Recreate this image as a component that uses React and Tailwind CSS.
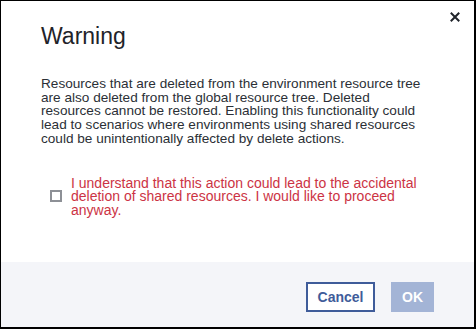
export default function App() {
  return (
    <div className="w-[476px] h-[329px] bg-white border border-black border-r-2 border-b-2 flex flex-col font-['Liberation_Sans',Arial,sans-serif]">
      <div className="relative flex-1 pl-[40px] pr-[44px]">
        <button className="absolute right-[13px] top-[10px] w-[12px] h-[12px] flex items-center justify-center text-[#1f2329]">
          <svg width="10" height="10" viewBox="0 0 10 10">
            <path d="M1.5 1.5 L8.5 8.5 M8.5 1.5 L1.5 8.5" stroke="currentColor" strokeWidth="2" strokeLinecap="square" />
          </svg>
        </button>
        <h1 className="mt-[21px] text-[23px] leading-[28px] text-[#1f2329]">Warning</h1>
        <p className="mt-[27px] text-[13.6px] leading-[13.7px] text-[#2b2f36]">
          Resources that are deleted from the environment resource tree are also deleted from the global resource tree. Deleted resources cannot be restored. Enabling this functionality could lead to scenarios where environments using shared resources could be unintentionally affected by delete actions.
        </p>
        <label className="mt-[31px] flex items-start gap-[9px] pl-[9px] pr-[2px]">
          <span className="mt-[13px] w-[12px] h-[12px] shrink-0 border-2 border-[#8d9096] bg-white" />
          <span className="text-[14px] leading-[13.6px] text-[#cc3344]">
            I understand that this action could lead to the accidental deletion of shared resources. I would like to proceed anyway.
          </span>
        </label>
      </div>
      <div className="h-[65px] bg-[#f4f5f9] flex items-start justify-end gap-[16px] pt-[20px] pr-[40px]">
        <button className="w-[69px] h-[30px] border-2 border-[#3f5c9a] bg-white text-[#3f5c9a] text-[14px] font-bold">Cancel</button>
        <button className="w-[43px] h-[30px] bg-[#a3b4d6] text-white text-[14px] font-bold">OK</button>
      </div>
    </div>
  );
}
